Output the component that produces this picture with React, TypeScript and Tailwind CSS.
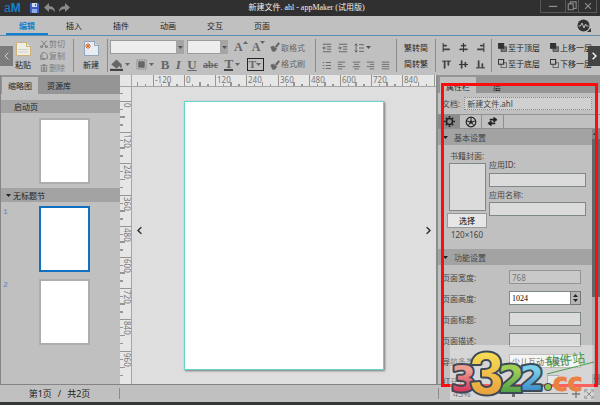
import type { ReactNode } from 'react';
import { useState } from 'react';

const MENU = ['编辑', '插入', '插件', '动画', '交互', '页面'];
const RULER_LABELS = [-120, 0, 120, 240, 360, 480, 600, 720, 840, 960];

interface IconProps {
  size?: number;
  className?: string;
  children: ReactNode;
}

function Icon({ size = 12, className = '', children }: IconProps) {
  return (
    <svg
      width={size}
      height={size}
      viewBox="0 0 12 12"
      fill="none"
      stroke="currentColor"
      className={`shrink-0 ${className}`}
      aria-hidden="true"
    >
      {children}
    </svg>
  );
}

function Caret() {
  return (
    <svg width="5" height="3" viewBox="0 0 5 3" fill="currentColor" className="shrink-0" aria-hidden="true">
      <path d="M0 0h5L2.5 3z" />
    </svg>
  );
}

function TitleBar() {
  return (
    <header className="relative flex h-4 shrink-0 items-center bg-[#303030] pl-1 text-[#8a8a8a]">
      <span className="w-[26px] font-['Liberation_Sans'] text-[12px] leading-4 text-[#1583cb]">
        a<b>M</b>
      </span>
      <button aria-label="保存">
        <svg width="9" height="10" viewBox="0 0 9 10">
          <path d="M0 0h8l1 1v9H0z" fill="#3d5fc4" />
          <path d="M2 0h5v4H2z" fill="#cfdcf6" />
          <path d="M2 6h5v4H2z" fill="#8fa9e8" />
          <path d="M5 1h1v2H5z" fill="#3d5fc4" />
        </svg>
      </button>
      <button aria-label="撤销" className="ml-[5px]">
        <svg width="11" height="10" viewBox="0 0 11 10" fill="currentColor">
          <path d="M5 0v3c4 0 6 3 6 6C9.500 7 8 6 5 6v3L0 4.500z" />
        </svg>
      </button>
      <button aria-label="重做" className="ml-1">
        <svg width="11" height="10" viewBox="0 0 11 10" fill="currentColor">
          <path d="M6 0v3C2 3 0 6 0 9c1.500-2 3-3 6-3v3l5-4.500z" />
        </svg>
      </button>
      <h1 className="absolute inset-x-0 pl-[13px] text-center font-['Liberation_Serif','Noto_Sans_CJK_SC',serif] text-[8px] leading-4 text-[#f0f0f0]">
        新建文件. ahl - appMaker (试用版)
      </h1>
      <div className="absolute top-0 right-[3px] flex h-[13px] border border-t-0 border-[#585858] text-[#8c8c8c]">
        <button aria-label="最小化" className="flex w-6 items-center justify-center">
          <Icon size={10}>
            <path d="M1 6.500h10" strokeWidth="1.500" />
          </Icon>
        </button>
        <button aria-label="还原" className="flex w-[14px] items-center justify-center border-x border-[#585858]">
          <Icon size={10}>
            <path d="M1.500 3.500h6v7h-6zM4 3V1h7v8H8" strokeWidth="1.300" />
          </Icon>
        </button>
        <button aria-label="关闭" className="flex w-[17px] items-center justify-center">
          <Icon size={10}>
            <path d="M2.500 2.500l7 7M9.500 2.500l-7 7" strokeWidth="1.500" />
          </Icon>
        </button>
      </div>
    </header>
  );
}

function MenuBar() {
  const [active, setActive] = useState('编辑');
  return (
    <nav className="flex h-5 shrink-0 items-stretch gap-[5px] border-b border-[#5d8eb2] bg-[#c0c0c0] pl-[6px]">
      {MENU.map((m) => (
        <button
          key={m}
          onClick={() => setActive(m)}
          className={
            m === active
              ? 'w-[42px] border-b-2 border-[#1480cc] pt-[2px] font-bold text-[#1480cc]'
              : 'w-[42px] border-b-2 border-transparent pt-[2px]'
          }
        >
          {m}
        </button>
      ))}
      <button aria-label="状态" className="mr-[9px] ml-auto">
        <svg width="14" height="13" viewBox="0 0 14 13">
          <circle cx="6.500" cy="6.500" r="6" fill="#333" />
          <path d="M1.500 7h2l1.500-3 2 5 1.500-4 1 2h2" fill="none" stroke="#c0c0c0" />
          <path d="M10 13h4V9z" fill="#333" />
        </svg>
      </button>
    </nav>
  );
}

function Divider() {
  return <div className="h-[33px] w-px shrink-0 bg-[#8b8b8b]" />;
}

function FontBox({ label, width }: { label: string; width: string }) {
  return (
    <div className={`relative h-[14px] shrink-0 ${width}`}>
      <select
        aria-label={label}
        className="h-full w-full appearance-none border border-[#9a9a9a] bg-[#ededed]"
      />
      <span className="pointer-events-none absolute inset-y-0 right-0 flex w-2 items-center justify-center bg-[#a5a5a5] text-[#555]">
        <Caret />
      </span>
    </div>
  );
}

function ToolButton({ label, children }: { label: string; children: ReactNode }) {
  return (
    <button aria-label={label} className="flex h-[13px] shrink-0 items-center justify-center gap-[2px]">
      {children}
    </button>
  );
}

const ALIGN_ICONS = [
  { label: '左对齐', d: 'M1.500 0v12M2 3h4v1H2zM2 8h8v1H2z' },
  { label: '水平居中', d: 'M6 0v12M3 3h6v1H3zM1 8h10v1H1z' },
  { label: '右对齐', d: 'M10.500 0v12M6 3h4v1H6zM2 8h8v1H2z' },
  { label: '顶对齐', d: 'M0 1.500h12M3 2h1v9H3zM8 2h1v5H8z' },
  { label: '垂直居中', d: 'M0 6h12M3 1h1v10H3zM8 3h1v6H8z' },
  { label: '底对齐', d: 'M0 10.500h12M3 1h1v9H3zM8 5h1v5H8z' },
];

const PARA_ICONS = [
  { label: '列表', d: 'M1 2h2M5 2h7M1 6h2M5 6h7M1 10h2M5 10h7' },
  { label: '文字左对齐', d: 'M1 1.500h10M1 4.500h6M1 7.500h10M1 10.500h6' },
  { label: '文字居中', d: 'M1 1.500h10M3 4.500h6M1 7.500h10M3 10.500h6' },
  { label: '文字右对齐', d: 'M1 1.500h10M5 4.500h6M1 7.500h10M5 10.500h6' },
  { label: '两端对齐', d: 'M1 1.500h10M1 4.500h10M1 7.500h10M1 10.500h10' },
];

function LayerIcon({ front }: { front: boolean }) {
  return (
    <Icon size={9}>
      <path d="M4 5h7.500v6.500H4z" fill={front ? '#777' : '#c0c0c0'} stroke="#444" />
      <path d="M.5.5h7v6.500h-7z" fill={front ? '#333' : '#c0c0c0'} stroke="#333" strokeWidth="1.500" />
    </Icon>
  );
}

function Brush() {
  return (
    <Icon size={10}>
      <path d="M11 1L7 6" strokeWidth="2.500" />
      <path d="M1 6l3-1 4 3-2 3-3 0z" fill="currentColor" />
    </Icon>
  );
}

function Toolbar() {
  return (
    <div className="relative flex h-[39px] shrink-0 items-center overflow-hidden bg-[#c0c0c0] whitespace-nowrap">
      <button aria-label="向左滚动" className="flex h-5 w-[13px] shrink-0 items-center justify-center bg-[#7c7c7c] text-[#d5d5d5]">
        <Icon size={8}>
          <path d="M8 1L3 6l5 5" strokeWidth="1.500" />
        </Icon>
      </button>
      <button className="ml-[2px] flex w-4 shrink-0 flex-col items-center gap-[2px]">
        <svg width="15" height="16" viewBox="0 0 15 16">
          <path d="M.5 1.500h10l4 4v9H.5z" fill="#efeee6" stroke="#cbb377" />
          <path d="M10.500 1.500v4h4" fill="#d9e3ee" stroke="#cbb377" />
          <path d="M2 8.500h10M2 11h10" stroke="#cfcfcf" />
        </svg>
        粘贴
      </button>
      <div className="ml-[9px] flex w-[33px] shrink-0 flex-col gap-px text-[#7d7d7d]">
        <button className="flex items-center gap-px">
          <Icon size={8}>
            <path d="M2 1l7 8M10 1L3 9M1 9h3v2H1zM8 9h3v2H8z" strokeWidth="1.500" />
          </Icon>
          剪切
        </button>
        <button className="flex items-center gap-px">
          <Icon size={8}>
            <path d="M3 1h5l3 3v6H3zM1 4v7h7" strokeWidth="1.300" />
          </Icon>
          复制
        </button>
        <button className="flex items-center gap-px">
          <Icon size={8}>
            <path d="M1 2.500h10M4 1h4M2 4v7h8V4M5 4v6M7 4v6" strokeWidth="1.500" />
          </Icon>
          删除
        </button>
      </div>
      <Divider />
      <button className="mr-2 ml-[9px] flex w-4 shrink-0 flex-col items-center gap-[2px]">
        <svg width="15" height="16" viewBox="0 0 15 16">
          <path d="M.5.5h10l4 4v10H.5z" fill="#e9edf1" stroke="#8ea5bb" />
          <path d="M10.500.5v4h4" fill="#cfdbe8" stroke="#8ea5bb" />
          <path d="M4 2v6M1 5h6M2 3l4 4M6 3L2 7" stroke="#dd6a2c" />
        </svg>
        新建
      </button>
      <Divider />

      <div className="ml-[2px] flex w-[195px] shrink-0 flex-col gap-1 text-[#666]">
        <div className="flex items-center">
          <FontBox label="字体" width="w-[74px]" />
          <FontBox label="字号" width="ml-[3px] w-[41px]" />
          <div className="ml-[6px] flex gap-1 font-['Liberation_Serif'] text-[12px] leading-3 font-bold">
            <button aria-label="增大字号" className="flex">
              A
              <span className="rotate-180 self-start">
                <Caret />
              </span>
            </button>
            <button aria-label="减小字号" className="flex">
              A
              <span className="self-start">
                <Caret />
              </span>
            </button>
          </div>
          <button className="ml-auto flex items-center gap-px">
            <Brush />
            取格式
          </button>
        </div>
        <div className="flex items-center justify-between font-['Liberation_Serif','Noto_Sans_CJK_SC',serif] text-[13px] leading-none">
          <ToolButton label="填充颜色">
            <Icon size={13}>
              <path d="M2 6l4-4 4 4-4 3z" fill="currentColor" />
              <path d="M10 6v3" strokeWidth="1.500" />
              <path d="M0 11h12" stroke="#444" strokeWidth="2" />
            </Icon>
            <Caret />
          </ToolButton>
          <ToolButton label="边框">
            <Icon size={11}>
              <path d="M1 1h10v10H1z" strokeDasharray="1 1" />
              <path d="M3 3h6v6H3z" fill="currentColor" />
            </Icon>
            <Caret />
          </ToolButton>
          <ToolButton label="加粗">
            <b>B</b>
          </ToolButton>
          <ToolButton label="斜体">
            <b className="italic">I</b>
          </ToolButton>
          <ToolButton label="下划线">
            <b className="underline">U</b>
          </ToolButton>
          <ToolButton label="删除线">
            <span className="text-[10px] font-bold line-through">abc</span>
          </ToolButton>
          <ToolButton label="文字颜色">
            <b className="border-b-2 border-[#444] leading-[11px]">T</b>
            <Caret />
          </ToolButton>
          <button aria-label="文字背景" className="flex h-[13px] w-[17px] items-center justify-center border border-[#222]">
            <b className="text-[11px]">T</b>
            <Caret />
          </button>
          <button className="flex items-center gap-px text-[8px]">
            <Brush />
            格式刷
          </button>
        </div>
      </div>

      <div className="mr-[6px] ml-[10px]">
        <Divider />
      </div>
      <div className="mr-[6px] flex w-[68px] shrink-0 flex-col gap-[7px] text-[#555]">
        <div className="flex items-center gap-[6px]">
          <ToolButton label="减少缩进">
            <Icon size={10}>
              <path d="M1 1.500h10M6 4.500h5M6 7.500h5M1 10.500h10M5 6H1M3 4L1 6l2 2" />
            </Icon>
          </ToolButton>
          <ToolButton label="增加缩进">
            <Icon size={10}>
              <path d="M1 1.500h10M6 4.500h5M6 7.500h5M1 10.500h10M0 6h4M2 4l2 2-2 2" />
            </Icon>
          </ToolButton>
          <ToolButton label="行距">
            <Icon size={10}>
              <path d="M2.500 1v10M1 3l1.500-2L4 3M1 9l1.500 2L4 9M6 2h6M6 6h6M6 10h6" />
            </Icon>
            <Caret />
          </ToolButton>
        </div>
        <div className="flex h-[9px] items-center justify-between">
          {PARA_ICONS.map((p) => (
            <button key={p.label} aria-label={p.label}>
              <Icon size={9}>
                <path d={p.d} />
              </Icon>
            </button>
          ))}
        </div>
      </div>
      <Divider />
      <div className="mx-[7px] flex shrink-0 flex-col gap-[5px]">
        <button>繁转简</button>
        <button>简转繁</button>
      </div>
      <Divider />
      <div className="mx-[6px] grid shrink-0 grid-cols-3 gap-x-2 gap-y-2 text-[#333]">
        {ALIGN_ICONS.map((a) => (
          <button key={a.label} aria-label={a.label}>
            <Icon size={9}>
              <path d={a.d} strokeWidth="1.300" />
            </Icon>
          </button>
        ))}
      </div>
      <Divider />
      <div className="ml-[6px] grid shrink-0 grid-cols-2 gap-x-[10px] gap-y-[5px]">
        {['至于顶层', '上移一层', '至于底层', '下移一层'].map((t, i) => (
          <button key={t} className="flex items-center gap-px">
            <LayerIcon front={i < 2} />
            {t}
          </button>
        ))}
      </div>
      <button
        aria-label="向右滚动"
        className="absolute right-0 flex h-5 w-3 items-center justify-center bg-[#434343] text-white"
      >
        <Icon size={8}>
          <path d="M4 1l5 5-5 5" strokeWidth="2" />
        </Icon>
      </button>
    </div>
  );
}

function Thumb({ active, label }: { active?: boolean; label: string }) {
  return (
    <button
      aria-label={label}
      className={
        active
          ? 'h-[66px] w-[51px] border-2 border-[#1170c2] bg-white'
          : 'h-[66px] w-[51px] border-2 border-[#adadad] bg-white'
      }
    />
  );
}

function ThumbPanel() {
  return (
    <aside className="flex w-[120px] shrink-0 flex-col border-l border-[#858585] bg-[#c0c0c0]">
      <div className="flex h-[19px] shrink-0 items-end bg-[#959595] pl-px">
        <button className="h-[17px] w-[36px] bg-[#c0c0c0]">缩略图</button>
        <button className="h-[17px] w-[42px]">资源库</button>
      </div>
      <h2 className="mt-[6px] h-[13px] shrink-0 bg-[#a3a3a3] pl-[13px] leading-[13px]">启动页</h2>
      <div className="mt-[5px] flex justify-center pl-2">
        <Thumb label="启动页" />
      </div>
      <h2 className="mt-[4px] flex h-[14px] shrink-0 items-center gap-[2px] bg-[#a3a3a3] pl-[5px]">
        <Caret />
        无标题节
      </h2>
      <ol className="mt-1 flex flex-col gap-[7px] font-['Liberation_Mono']">
        {[1, 2].map((n) => (
          <li key={n} className="relative flex justify-center pl-2">
            <span className="absolute left-[2px] text-[#5b82c0]">{n}</span>
            <Thumb label={`第${n}页`} active={n === 1} />
          </li>
        ))}
      </ol>
    </aside>
  );
}

// Ticks every 30 units; the labelled one is every fourth.
function Ruler({ vertical }: { vertical?: boolean }) {
  const origin = vertical ? 14 : 52;
  return (
    <svg
      className={vertical ? 'h-full w-3' : 'h-3 w-full'}
      fontFamily="'Noto Sans', sans-serif"
      fontSize="8"
      fill="#777"
      stroke="none"
      aria-hidden="true"
    >
      {RULER_LABELS.filter((v) => !vertical || v >= 0).map((v) => {
        const at = origin + Math.round((v / 120) * 31.2);
        return (
          <g key={v} transform={vertical ? `translate(12 ${at}) rotate(90)` : `translate(${at} 0)`}>
            <path d="M.5 0v12M8.500 9v3M16.500 7v5M24.500 9v3M-7.500 9v3M-15.500 7v5" stroke="#959595" />
            <text x="2" y="8">
              {v}
            </text>
          </g>
        );
      })}
    </svg>
  );
}

function Canvas() {
  return (
    <main className="flex min-w-0 flex-1 flex-col border-r-2 border-[#8c8c8c] bg-[#dedede]">
      <div className="flex h-3 shrink-0 border-b border-[#a5a5a5] bg-[#e6e6e6]">
        <div className="w-3 shrink-0 border-r border-[#a5a5a5]" />
        <div className="min-w-0 flex-1 overflow-hidden">
          <Ruler />
        </div>
      </div>
      <div className="flex min-h-0 flex-1">
        <div className="w-3 shrink-0 overflow-hidden border-r border-[#a5a5a5] bg-[#e6e6e6]">
          <Ruler vertical />
        </div>
        <div className="flex min-w-0 flex-1 items-center justify-between px-[3px] text-[#222]">
          <button aria-label="上一页" className="pb-[10px]">
            <Icon size={9}>
              <path d="M8.500 1.500L4 6l4.500 4.500" strokeWidth="1.800" />
            </Icon>
          </button>
          <div className="h-[269px] w-[200px] border border-[#65d6cb] bg-white shadow-[1px_1px_2px_#777]" />
          <button aria-label="下一页" className="pb-[10px]">
            <Icon size={9}>
              <path d="M3.500 1.500L8 6l-4.500 4.500" strokeWidth="1.800" />
            </Icon>
          </button>
        </div>
      </div>
    </main>
  );
}

function SectionHeader({ children }: { children: ReactNode }) {
  return (
    <h2 className="flex h-4 items-center gap-[6px] bg-[#a3a3a3] pl-[5px] text-[#444]">
      <span className="text-[#222]">
        <Caret />
      </span>
      {children}
    </h2>
  );
}

interface Field {
  id: string;
  label: string;
  value: string;
  kind?: 'disabled' | 'number' | 'select';
}

const FIELDS: Field[] = [
  { id: 'page-width', label: '页面宽度:', value: '768', kind: 'disabled' },
  { id: 'page-height', label: '页面高度:', value: '1024', kind: 'number' },
  { id: 'page-title', label: '页面标题:', value: '' },
  { id: 'page-desc', label: '页面描述:', value: '' },
  { id: 'nav-type', label: '导航条类型:', value: '少儿互动书模式', kind: 'select' },
];

const INPUT = 'h-[14px] w-full border border-[#7e8789] bg-[#dbdbdb] px-[2px]';

function FieldRow({ id, label, value, kind }: Field) {
  return (
    <div className="flex h-[14px] items-center">
      <label htmlFor={id} className="w-[67px] shrink-0">
        {label}
      </label>
      <div className="relative w-[72px]">
        {kind === 'select' ? (
          <select id={id} className="h-[14px] w-full appearance-none border border-[#9a9a9a] bg-[#f2f2f2] px-[2px] text-black">
            <option>{value}</option>
          </select>
        ) : kind === 'number' ? (
          <>
            <input
              id={id}
              defaultValue={value}
              className="h-[14px] w-full border border-[#7e8789] bg-white px-[2px] font-['Liberation_Serif'] text-[8px] text-black"
            />
            <span className="absolute inset-y-0 right-0 flex w-[11px] flex-col items-center justify-evenly border border-[#777] bg-[#b5b5b5] text-[#222]">
              <span className="rotate-180">
                <Caret />
              </span>
              <Caret />
            </span>
          </>
        ) : (
          <input
            id={id}
            defaultValue={value}
            disabled={kind === 'disabled'}
            className={kind === 'disabled' ? 'h-[14px] w-full border border-[#949494] bg-[#c9c9c9] px-[2px] text-[#777]' : INPUT}
          />
        )}
      </div>
    </div>
  );
}

function Properties() {
  return (
    <aside className="flex w-[162px] shrink-0 flex-col overflow-hidden bg-[#c0c0c0] text-[#444]">
      <div className="flex h-[18px] shrink-0 items-end bg-[#959595] pl-[2px] text-[#222]">
        <button className="h-4 w-[36px] bg-[#c0c0c0] pt-[2px]">属性栏</button>
        <button className="h-4 w-[42px] pt-[2px]">层</button>
      </div>
      <div className="flex h-[21px] shrink-0 items-center gap-1 pr-[8px] pl-1">
        <label htmlFor="doc-name" className="shrink-0">
          文档:
        </label>
        <input
          id="doc-name"
          defaultValue="新建文件.ahl"
          className="h-[13px] min-w-0 flex-1 border border-dotted border-[#8c8c8c] bg-[#d0d0d0] px-[2px]"
        />
      </div>
      <div className="flex h-[15px] shrink-0 border-y border-[#909090] text-[#222]">
        <button aria-label="设置" className="flex w-[22px] items-center justify-center bg-[#8c8c8c]">
          <Icon size={11}>
            <circle cx="6" cy="6" r="3.300" strokeWidth="1.700" />
            <path d="M6 0v2M6 10v2M0 6h2M10 6h2M2 2l1.300 1.300M8.700 8.700L10 10M10 2L8.700 3.300M3.300 8.700L2 10" strokeWidth="1.800" />
          </Icon>
        </button>
        <button aria-label="媒体" className="flex w-[22px] items-center justify-center border-r border-[#909090]">
          <Icon size={12}>
            <circle cx="6" cy="6" r="4.800" strokeWidth="1.200" />
            <circle cx="6" cy="6" r="1.300" fill="currentColor" />
            <path d="M6 1v3M1.500 5l3 .5M10.500 5l-3 .5M3 10l2-3M9 10L7 7" />
          </Icon>
        </button>
        <button aria-label="切换" className="flex w-[22px] items-center justify-center border-r border-[#909090]">
          <Icon size={11}>
            <path d="M3 4h5M9 8H4" strokeWidth="1.800" />
            <path d="M7.500 1.500L11 4 7.500 6.500zM4.500 5.500L1 8l3.500 2.500z" fill="currentColor" />
          </Icon>
        </button>
      </div>
      <div className="flex min-h-0 flex-1">
        <div className="min-w-0 flex-1 overflow-hidden">
          <SectionHeader>基本设置</SectionHeader>
          <div className="flex gap-[2px] pt-1 pb-[9px] pl-[9px]">
            <div className="flex w-10 shrink-0 flex-col items-center">
              <span className="leading-[13px] whitespace-nowrap">书籍封面:</span>
              <div className="mt-px h-[48px] w-[37px] border border-[#7e8789] bg-[#dbdbdb]" />
              <button className="mt-[2px] h-[15px] w-10 border border-[#999] bg-[#e6e6e6] text-black">选择</button>
              <span className="mt-px font-['Noto_Sans']">120×160</span>
            </div>
            <div className="flex w-[97px] flex-col pt-[10px]">
              <label htmlFor="app-id" className="mb-[3px]">
                应用ID:
              </label>
              <input id="app-id" className={INPUT} />
              <label htmlFor="app-name" className="mt-[2px] mb-[2px]">
                应用名称:
              </label>
              <input id="app-name" className={INPUT} />
            </div>
          </div>
          <SectionHeader>功能设置</SectionHeader>
          <div className="flex flex-col gap-[7px] pt-[5px] pl-1">
            {FIELDS.map((f) => (
              <FieldRow key={f.id} {...f} />
            ))}
            <div className="flex items-center">
              <label htmlFor="open-as" className="w-[105px]">
                打开方式:
              </label>
              <input id="open-as" type="checkbox" className="h-3 w-3 appearance-none border border-[#7e8789] bg-[#dbdbdb]" />
            </div>
          </div>
        </div>
        <div className="flex w-2 shrink-0 flex-col bg-[#a9adad] text-[#333]">
          <span className="flex h-[10px] rotate-180 items-center justify-center bg-[#858585]">
            <Caret />
          </span>
          <div className="h-[158px] bg-[#626767]" />
          <span className="mt-auto flex h-[10px] items-center justify-center bg-[#858585]">
            <Caret />
          </span>
        </div>
      </div>
    </aside>
  );
}

function StatusBar() {
  return (
    <footer className="flex h-[21px] shrink-0 items-center border-t border-b-[3px] border-t-[#858585] border-b-[#333636] bg-[#c0c0c0]">
      <div className="flex w-[120px] justify-center gap-[6px] border-r border-[#8c8c8c] text-[9px]">
        <span>第1页</span>
        <span>/</span>
        <span>共2页</span>
      </div>
      <div className="ml-auto flex w-[162px] items-center gap-1 border-l border-[#8c8c8c] pr-[6px] pl-[14px] text-[#333]">
        <label htmlFor="zoom" className="w-[26px] text-[9px]">
          43%
        </label>
        <button aria-label="缩小">
          <Icon size={8}>
            <path d="M0 6h12" strokeWidth="2" />
          </Icon>
        </button>
        <input
          id="zoom"
          type="range"
          defaultValue="24"
          className="h-[7px] min-w-0 flex-1 appearance-none bg-[linear-gradient(#444,#444)] bg-[length:100%_1px] bg-center bg-no-repeat [&::-webkit-slider-thumb]:h-[7px] [&::-webkit-slider-thumb]:w-[3px] [&::-webkit-slider-thumb]:appearance-none [&::-webkit-slider-thumb]:bg-[#222]"
        />
        <button aria-label="放大">
          <Icon size={8}>
            <path d="M0 6h12M6 0v12" strokeWidth="2" />
          </Icon>
        </button>
        <button aria-label="适合窗口">
          <Icon size={10}>
            <path d="M1 4V1h3M8 1h3v3M11 8v3H8M4 11H1V8M3 3l6 6M9 3L3 9" />
          </Icon>
        </button>
      </div>
    </footer>
  );
}

function Watermark() {
  return (
    <svg
      width="144"
      height="55"
      viewBox="0 0 144 55"
      className="pointer-events-none absolute right-[6px] bottom-[5px] bg-white/35"
      fontFamily="'DejaVu Sans', 'Noto Sans CJK SC', sans-serif"
      fontWeight="bold"
    >
      <defs>
        <linearGradient id="red" x2="0" y2="1">
          <stop offset="0.3" stopColor="#ef9d92" />
          <stop offset="0.8" stopColor="#d8375c" />
        </linearGradient>
        <linearGradient id="gold" x2="0" y2="1">
          <stop offset="0.2" stopColor="#f6dc55" />
          <stop offset="0.9" stopColor="#e79a3c" />
        </linearGradient>
        <linearGradient id="green" x2="0" y2="1">
          <stop offset="0.3" stopColor="#9fcf55" />
          <stop offset="0.8" stopColor="#51a04a" />
        </linearGradient>
        <linearGradient id="blue" x2="0" y2="1">
          <stop offset="0.3" stopColor="#77cfe9" />
          <stop offset="0.8" stopColor="#3f8fcb" />
        </linearGradient>
      </defs>
      <g stroke="#3d4a56" strokeWidth="4" strokeLinejoin="round" paintOrder="stroke">
        <text x="1" y="46" fontSize="36" fill="url(#red)">
          3
        </text>
        <text x="48" y="47" fontSize="38" fill="url(#green)">
          2
        </text>
        <text x="70" y="45" fontSize="34" fill="url(#blue)">
          2
        </text>
        <text x="20" y="49" fontSize="60" fontFamily="'Liberation Sans', sans-serif" fill="url(#gold)">
          3
        </text>
        <circle cx="98" cy="42" r="3" fill="#8dc34a" strokeWidth="2" />
      </g>
      <text x="103" y="46" fontSize="25" fill="#ea8144" stroke="#ea8144">
        cc
      </text>
      <g transform="rotate(-7 97 22)" fill="#4a9c4a">
        <text x="97" y="22" fontSize="13" fontWeight="normal">
          软件站
        </text>
      </g>
      <path d="M97 29l47-12" stroke="#4a9c4a" />
    </svg>
  );
}

export default function App() {
  return (
    <div className="relative flex h-screen flex-col overflow-hidden bg-[#c0c0c0] font-['Noto_Sans','Noto_Sans_CJK_SC',sans-serif] text-[8px] leading-[11px] text-[#222]">
      <TitleBar />
      <MenuBar />
      <Toolbar />
      <div className="flex min-h-0 flex-1">
        <ThumbPanel />
        <Canvas />
        <Properties />
      </div>
      <StatusBar />
      <div className="pointer-events-none absolute top-[83px] right-[2px] bottom-[18px] w-[157px] border-[3px] border-[#fb0d0d]" />
      <Watermark />
    </div>
  );
}
